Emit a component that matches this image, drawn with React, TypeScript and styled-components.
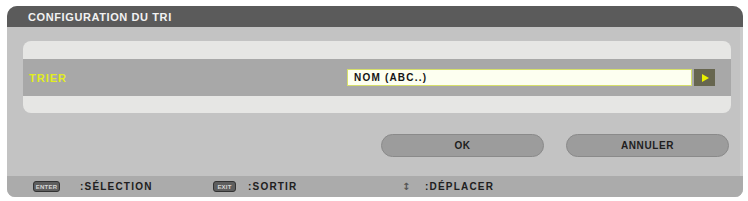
import React from "react";
import styled, { createGlobalStyle } from "styled-components";

const Global = createGlobalStyle`
  html, body { margin: 0; padding: 0; background: #ffffff; }
  body { font-family: "Liberation Sans", Arial, sans-serif; }
`;

const Dialog = styled.div`
  margin: 6px 5px 0 7px;
  width: 736px;
  height: 191px;
  display: flex;
  flex-direction: column;
  background: #c3c3c3;
  border-radius: 10px 10px 8px 8px;
  overflow: hidden;
  box-shadow: inset -3px 0 0 #cbcbcb;
`;

const TitleBar = styled.div`
  height: 21px;
  flex: none;
  background: #5b5b5b;
  display: flex;
  align-items: center;
  padding-left: 21px;
  color: #f2f2f2;
  font-size: 11px;
  font-weight: bold;
  letter-spacing: 0.6px;
`;

const Body = styled.div`
  flex: 1;
  padding: 14px 12px 0 16px;
  display: flex;
  flex-direction: column;
`;

const Panel = styled.div`
  border-radius: 8px;
  overflow: hidden;
  display: flex;
  flex-direction: column;
`;

const LightStrip = styled.div<{ $h: number }>`
  height: ${(p) => p.$h}px;
  background: #e6e6e4;
`;

const Row = styled.div`
  height: 37px;
  background: #a8a8a8;
  display: grid;
  grid-template-columns: 1fr 345px 21px;
  column-gap: 2px;
  align-items: center;
  padding: 0 16px 0 6px;
`;

const Label = styled.span`
  color: #e2ee1e;
  font-size: 11px;
  font-weight: bold;
  letter-spacing: 1px;
`;

const SelectBox = styled.div`
  height: 17px;
  box-sizing: border-box;
  background: #fdfff0;
  border: 1.5px solid #d6df6a;
  display: flex;
  align-items: center;
  padding-left: 6px;
  color: #151515;
  font-size: 10px;
  font-weight: bold;
  letter-spacing: 1.2px;
`;

const ArrowButton = styled.div`
  height: 17px;
  background: #67664f;
  display: flex;
  align-items: center;
  justify-content: center;
`;

const Triangle = styled.div`
  width: 0;
  height: 0;
  border-top: 4.5px solid transparent;
  border-bottom: 4.5px solid transparent;
  border-left: 7px solid #e8f000;
  margin-left: 2px;
`;

const Buttons = styled.div`
  margin-top: 21px;
  display: flex;
  justify-content: flex-end;
  gap: 22px;
  padding-right: 2px;
`;

const Button = styled.div`
  width: 163px;
  height: 23px;
  box-sizing: border-box;
  border-radius: 12px;
  background: #9c9c9c;
  border: 1px solid #8a8a8a;
  display: flex;
  align-items: center;
  justify-content: center;
  color: #1e1e1e;
  font-size: 10px;
  font-weight: bold;
  letter-spacing: 0.6px;
`;

const Footer = styled.div`
  height: 21px;
  flex: none;
  background: #ababab;
  display: flex;
  align-items: center;
  padding-left: 26px;
`;

const FooterItem = styled.div<{ $w?: number }>`
  width: ${(p) => (p.$w ? `${p.$w}px` : "auto")};
  display: flex;
  align-items: center;
`;

const KeySlot = styled.div<{ $w: number }>`
  width: ${(p) => p.$w}px;
  display: flex;
  align-items: center;
`;

const KeyBadge = styled.span<{ $w: number }>`
  width: ${(p) => p.$w}px;
  height: 11px;
  box-sizing: border-box;
  border-radius: 3px;
  background: #5e5e5e;
  border: 1px solid #333;
  color: #d8d8d8;
  font-size: 6px;
  font-weight: bold;
  display: flex;
  align-items: center;
  justify-content: center;
  letter-spacing: 0.2px;
`;

const UpDown = styled.span`
  color: #555;
  font-family: "DejaVu Sans", sans-serif;
  font-size: 10px;
  font-weight: bold;
  padding-left: 2px;
`;

const FooterText = styled.span`
  color: #202020;
  font-size: 10px;
  font-weight: bold;
  letter-spacing: 1.2px;
`;

export default function App() {
  return (
    <>
      <Global />
      <Dialog>
        <TitleBar>CONFIGURATION DU TRI</TitleBar>
        <Body>
          <Panel>
            <LightStrip $h={18} />
            <Row>
              <Label>TRIER</Label>
              <SelectBox>NOM (ABC..)</SelectBox>
              <ArrowButton>
                <Triangle />
              </ArrowButton>
            </Row>
            <LightStrip $h={17} />
          </Panel>
          <Buttons>
            <Button>OK</Button>
            <Button>ANNULER</Button>
          </Buttons>
        </Body>
        <Footer>
          <FooterItem $w={180}>
            <KeySlot $w={47}>
              <KeyBadge $w={27}>ENTER</KeyBadge>
            </KeySlot>
            <FooterText>:SÉLECTION</FooterText>
          </FooterItem>
          <FooterItem $w={187}>
            <KeySlot $w={35}>
              <KeyBadge $w={23}>EXIT</KeyBadge>
            </KeySlot>
            <FooterText>:SORTIR</FooterText>
          </FooterItem>
          <FooterItem>
            <KeySlot $w={25}>
              <UpDown>↕</UpDown>
            </KeySlot>
            <FooterText>:DÉPLACER</FooterText>
          </FooterItem>
        </Footer>
      </Dialog>
    </>
  );
}
